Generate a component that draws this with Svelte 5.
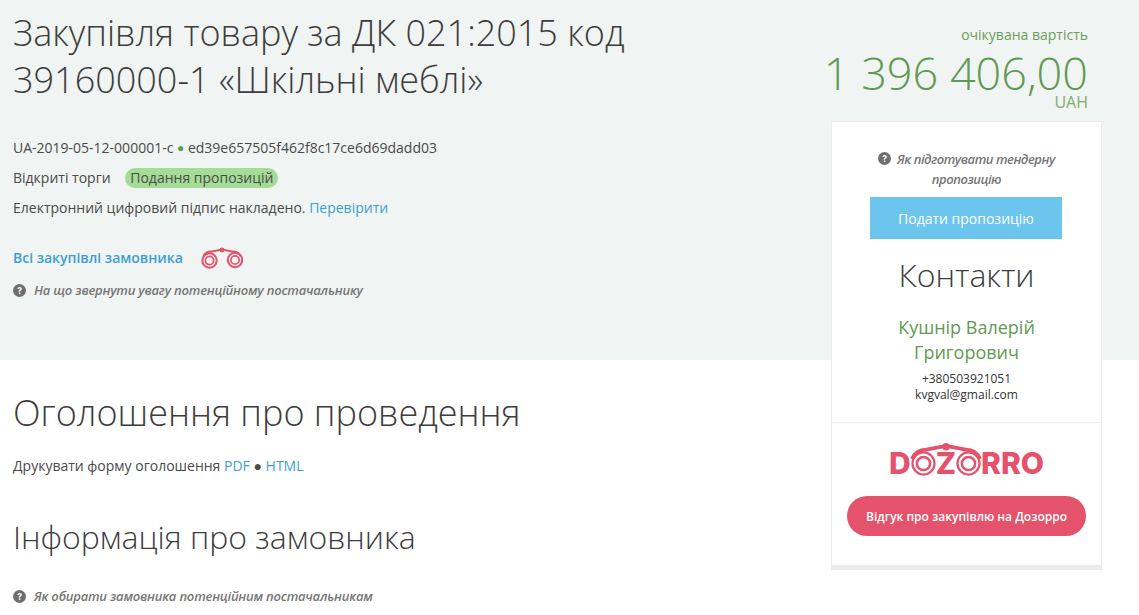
<script>
	const meta = {
		id: 'UA-2019-05-12-000001-c',
		hash: 'ed39e657505f462f8c17ce6d69dadd03'
	};
</script>

{#snippet help()}
	<svg class="help" viewBox="0 0 24 24" aria-hidden="true">
		<circle cx="12" cy="12" r="12" fill="#6f6f6f" />
		<path d="M8 9.4c.2-2.4 2-3.7 4.2-3.7 2.3 0 4 1.4 4 3.4 0 1.5-.8 2.3-1.9 3-1 .6-1.3 1-1.3 2.1h-2.6c0-1.9.5-2.7 1.8-3.5.9-.6 1.3-.9 1.3-1.5 0-.7-.6-1.2-1.4-1.2-.9 0-1.4.5-1.5 1.4z" fill="#fff" />
		<rect x="10.9" y="15.8" width="2.7" height="2.7" fill="#fff" />
	</svg>
{/snippet}

{#snippet ring()}
	<svg class="ring" viewBox="0 0 34 34" aria-hidden="true">
		<circle cx="17" cy="17" r="15" fill="none" stroke="#e5526b" stroke-width="3" />
		<circle cx="17" cy="17" r="9" fill="none" stroke="#e5526b" stroke-width="3.4" />
	</svg>
{/snippet}

<div class="page">
	<main class="content">
		<h1>Закупівля товару за ДК 021:2015 код 39160000-1 «Шкільні меблі»</h1>

		<div class="meta">
			<p>{meta.id} <span class="dot">●</span> {meta.hash}</p>
			<p class="status-row">Відкриті торги <span class="status">Подання пропозицій</span></p>
			<p>Електронний цифровий підпис накладено. <a href="#check">Перевірити</a></p>
		</div>

		<div class="buyer-link">
			<a href="#all">Всі закупівлі замовника</a>
			<svg class="binoculars" viewBox="0 0 42 22" aria-hidden="true">
				<g fill="none" stroke="#e5526b">
					<circle cx="8.5" cy="13.5" r="7.2" stroke-width="2" />
					<circle cx="8.5" cy="13.5" r="4.2" stroke-width="1.7" />
					<circle cx="34" cy="13" r="7.2" stroke-width="2" />
					<circle cx="34" cy="13" r="4.2" stroke-width="1.7" />
					<path d="M2.5 9 Q5 4 11 4.5 L21 2.5 31 4.5 Q37 4 39.5 9" stroke-width="2" />
				</g>
				<circle cx="21" cy="3" r="2.4" fill="#e5526b" />
			</svg>
		</div>

		<p class="hint">{@render help()} <em>На що звернути увагу потенційному постачальнику</em></p>

		<h2 class="notice">Оголошення про проведення</h2>
		<p class="print">Друкувати форму оголошення <a href="#pdf">PDF</a> ● <a href="#html">HTML</a></p>

		<h3>Інформація про замовника</h3>
		<p class="hint buyer-hint">{@render help()} <em>Як обирати замовника потенційним постачальникам</em></p>
	</main>

	<aside class="side">
		<div class="price">
			<div class="price-label">очікувана вартість</div>
			<div class="price-value">1 396 406,00</div>
			<div class="currency">UAH</div>
		</div>

		<div class="card">
			<section class="card-top">
				<p class="card-hint">{@render help()} <em>Як підготувати тендерну пропозицію</em></p>
				<button class="submit">Подати пропозицію</button>
				<h4>Контакти</h4>
				<div class="contact-name">Кушнір Валерій Григорович</div>
				<div class="contact-line">+380503921051</div>
				<div class="contact-line">kvgval@gmail.com</div>
			</section>
			<section class="card-bottom">
				<div class="logo">
					<span>D</span>
					{@render ring()}
					<span>Z</span>
					{@render ring()}
					<span>RRO</span>
					<svg class="bridge" viewBox="0 0 76 18" aria-hidden="true">
						<path d="M2 17 Q6 7 17 7 L38 3 59 7 Q70 7 74 17" fill="none" stroke="#e5526b" stroke-width="4" />
						<circle cx="38" cy="4" r="4" fill="#e5526b" />
					</svg>
				</div>
				<button class="review">Відгук про закупівлю на Дозорро</button>
			</section>
		</div>
	</aside>
</div>

<style>
	:global(body) {
		overflow: hidden;
		background: #fff;
	}

	.page {
		display: grid;
		grid-template-columns: 1fr 271px;
		column-gap: 100px;
		height: 615px;
		padding: 0 37px 0 13px;
		box-sizing: border-box;
		overflow: hidden;
		background: linear-gradient(#f0f4f2 360px, #fff 360px);
		font-family: 'Open Sans', sans-serif;
		font-size: 14px;
		color: #4a4a4a;
	}

	p {
		margin: 0;
	}

	a {
		color: #3f9fd1;
		text-decoration: none;
	}

	h1,
	h2,
	h3,
	h4 {
		margin: 0;
		font-weight: 300;
		color: #3d3d3d;
	}

	h1 {
		max-width: 640px;
		padding-top: 9px;
		font-size: 36px;
		line-height: 47px;
	}

	.meta {
		margin-top: 30px;
		line-height: 30px;
	}

	.dot {
		color: #5b9a4e;
		font-size: 12px;
		vertical-align: 1px;
	}

	.status {
		display: inline-block;
		margin-left: 11px;
		padding: 0 5px;
		line-height: 20px;
		border-radius: 10px;
		background: #a5dd97;
	}

	.buyer-link {
		display: flex;
		align-items: center;
		gap: 18px;
		margin-top: 22px;
	}

	.buyer-link a {
		font-weight: 600;
	}

	.binoculars {
		width: 42px;
		height: 22px;
		margin-top: 2px;
	}

	.hint {
		display: flex;
		align-items: center;
		gap: 8px;
		margin-top: 12px;
		font-size: 13px;
		font-weight: 600;
		letter-spacing: -0.2px;
		color: #777;
	}

	.help {
		display: inline-block;
		width: 13px;
		height: 13px;
		flex: none;
	}

	.notice {
		margin-top: 89px;
		font-size: 36px;
		line-height: 50px;
	}

	.print {
		margin-top: 18px;
	}

	h3 {
		margin-top: 41px;
		font-size: 32px;
		line-height: 41px;
	}

	.buyer-hint {
		margin-top: 30px;
	}

	.side {
		display: flex;
		flex-direction: column;
	}

	.price {
		padding-top: 25px;
		text-align: right;
		padding-right: 14px;
	}

	.price-label {
		color: #6b9e5e;
		line-height: 19px;
	}

	.price-value {
		margin-top: 6px;
		margin-left: -30px;
		font-size: 45px;
		line-height: 46px;
		font-weight: 300;
		color: #5f9a52;
		white-space: nowrap;
	}

	.currency {
		font-size: 16px;
		line-height: 12px;
		color: #7fae73;
	}

	.card {
		margin-top: 13px;
		background: #fff;
		border: 1px solid #ececec;
		border-bottom-width: 5px;
	}

	.card-top {
		padding: 27px 30px 19px;
		text-align: center;
		border-bottom: 1px solid #ececec;
	}

	.card-hint {
		font-size: 13px;
		font-weight: 600;
		letter-spacing: -0.45px;
		line-height: 20px;
		color: #777;
	}

	.card-hint .help {
		margin-right: 3px;
		vertical-align: -1px;
	}

	.submit {
		display: block;
		width: 192px;
		height: 42px;
		margin: 8px 0 0 8px;
		border: 0;
		background: #6bc5ec;
		color: #fff;
		font: 14px 'Open Sans', sans-serif;
	}

	h4 {
		margin-top: 14px;
		font-size: 32px;
		line-height: 44px;
	}

	.contact-name {
		margin: 18px auto 6px;
		max-width: 170px;
		font-size: 18px;
		line-height: 25px;
		color: #5f9a52;
	}

	.contact-line {
		font-size: 12px;
		line-height: 16px;
		color: #333;
	}

	.card-bottom {
		padding: 23px 15px 29px;
		text-align: center;
	}

	.logo {
		position: relative;
		display: inline-flex;
		align-items: center;
		height: 34px;
		color: #e5526b;
		font-family: Inter, sans-serif;
		font-size: 30px;
		font-weight: 800;
		line-height: 26px;
	}

	.ring {
		width: 25px;
		height: 25px;
	}

	.bridge {
		position: absolute;
		left: 21px;
		top: -3px;
		width: 72px;
		height: 17px;
	}

	.review {
		display: block;
		width: 239px;
		height: 40px;
		margin: 16px auto 0;
		border: 0;
		border-radius: 20px;
		background: #e5526b;
		color: #fff;
		font: 600 12px 'Open Sans', sans-serif;
	}
</style>
